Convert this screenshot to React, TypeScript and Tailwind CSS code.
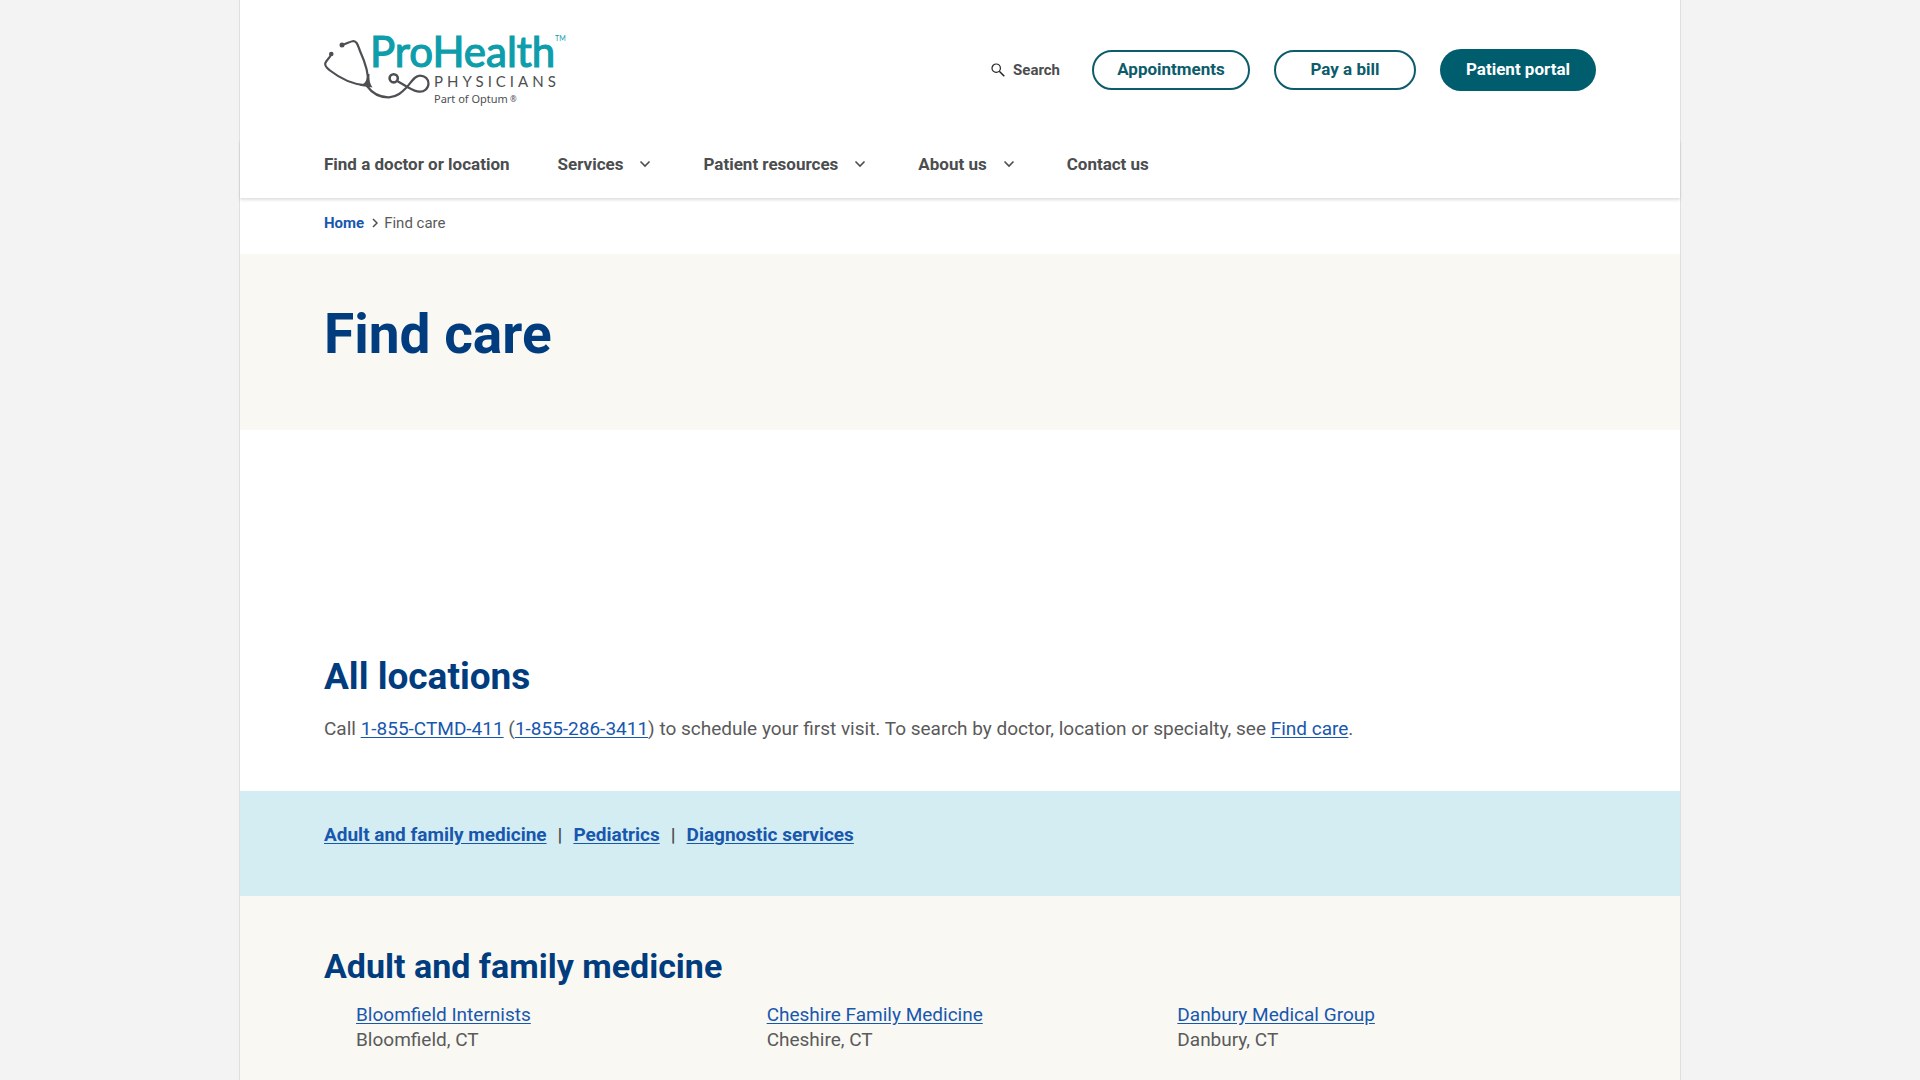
import { ReactNode } from "react";

const navItems = [
  { label: "Find a doctor or location", menu: false },
  { label: "Services", menu: true },
  { label: "Patient resources", menu: true },
  { label: "About us", menu: true },
  { label: "Contact us", menu: false },
];

const sections = ["Adult and family medicine", "Pediatrics", "Diagnostic services"];

const locations = [
  { name: "Bloomfield Internists", city: "Bloomfield, CT" },
  { name: "Cheshire Family Medicine", city: "Cheshire, CT" },
  { name: "Danbury Medical Group", city: "Danbury, CT" },
];

function Logo() {
  return (
    <svg viewBox="0 0 244 76" className="h-[76px] w-[244px] overflow-visible" role="img" aria-label="ProHealth Physicians, Part of Optum">
      <g fill="none" stroke="#4d4f53" strokeWidth="2.2" strokeLinecap="round" strokeLinejoin="round">
        <path d="M7.3 22 C6 26 2 28 1.2 31.500 C0.8 34.500 3 36 6 38.500 C17 47 28 52 40 53" />
        <path d="M18 13 C22 12 26 9.500 29.500 9 C33 9 34 14 36 19 C41 30 45 42 44 52" />
        <path d="M43 54 C48 61 56 65.500 65 65.300 C74 65 79 59 83.500 54.500 C88 49 91 43.600 96 43.600 C101 43.600 104.500 47 104.500 51.500 C104.500 56.500 100 60 95.500 59.700 C91 59.500 87 57 83.500 55 L74 49.500" />
        <circle cx="69.700" cy="46.300" r="4.100" strokeWidth="2.600" />
      </g>
      <circle cx="7.300" cy="22" r="2.300" fill="#4d4f53" />
      <circle cx="18" cy="13" r="2.500" fill="#4d4f53" />
      <path d="M43 42 L45.500 42 C45 48 46 52 48.500 55.500 C45 54.500 40 55 35 53.500 C40 52.500 43 50 43 42 Z" fill="#4d4f53" />
      <text x="46" y="35" className="fill-[#0d9dab] stroke-[#0d9dab] font-['Lato'] text-[42px]" strokeWidth="1.2">ProHealth</text>
      <text x="231" y="9" className="fill-[#0d9dab] font-['Lato'] text-[7px]">TM</text>
      <text x="110" y="55" className="fill-[#4d4f53] font-['Lato'] text-[15px] tracking-[4px]">PHYSICIANS</text>
      <text x="110" y="71" className="fill-[#4d4f53] font-['Noto_Sans'] text-[11px]">Part of Optum</text>
      <text x="186" y="70" className="fill-[#4d4f53] font-['Noto_Sans'] text-[8px]">®</text>
    </svg>
  );
}

function Chevron() {
  return (
    <svg viewBox="0 0 12 8" className="h-2 w-3" fill="none" stroke="#4b4d4f" strokeWidth="1.6" aria-hidden="true">
      <path d="M1.500 1.500 L6 6 L10.500 1.500" />
    </svg>
  );
}

function TextLink({ children }: { children: ReactNode }) {
  return (
    <a href="#" className="text-[#1857ae] underline underline-offset-2">
      {children}
    </a>
  );
}

export default function App() {
  return (
    <div className="min-h-screen overflow-hidden bg-[#f3f3f3] font-['Roboto','Liberation_Sans',sans-serif] text-[19px] text-[#5a5a5a]">
      <div className="mx-auto min-h-screen max-w-[1442px] border-x border-[#e0e0e0] bg-white">
        <header>
          <div className="flex h-[140px] items-center justify-between px-[84px]">
            <a href="#">
              <Logo />
            </a>
            <div className="flex items-center gap-6">
              <button type="button" className="mr-2 flex items-center gap-2 text-[15px] font-bold text-[#4b4d4f]">
                <svg viewBox="0 0 14 14" className="h-3.5 w-3.5" fill="none" stroke="#222" strokeWidth="1.200" aria-hidden="true">
                  <circle cx="5.200" cy="5.200" r="4.200" />
                  <path d="M8.300 8.300 L13.300 13.300" strokeWidth="1.500" />
                </svg>
                Search
              </button>
              <a href="#" className="flex h-10 w-[158px] items-center justify-center rounded-full border-2 border-[#0c5c6c] text-[17px] font-bold text-[#0c5c6c]">Appointments</a>
              <a href="#" className="flex h-10 w-[142px] items-center justify-center rounded-full border-2 border-[#0c5c6c] text-[17px] font-bold text-[#0c5c6c]">Pay a bill</a>
              <a href="#" className="flex h-[42px] w-[156px] items-center justify-center rounded-full bg-[#005d6e] text-[17px] font-bold text-white">Patient portal</a>
            </div>
          </div>
          <nav aria-label="Main" className="px-[84px] pt-3 pb-[22px] shadow-[0_2px_3px_rgba(0,0,0,0.13)]">
            <ul className="flex items-center gap-12 text-[17px] leading-6 font-bold text-[#4b4d4f]">
              {navItems.map((item) => (
                <li key={item.label}>
                  {item.menu ? (
                    <button type="button" className="flex items-center gap-4 pr-1">
                      {item.label}
                      <Chevron />
                    </button>
                  ) : (
                    <a href="#" className="block">{item.label}</a>
                  )}
                </li>
              ))}
            </ul>
          </nav>
        </header>

        <main>
          <nav aria-label="Breadcrumb" className="flex h-14 items-center px-[84px] pb-1.5 text-[15px]">
            <a href="#" className="font-bold text-[#1857ae]">Home</a>
            <svg viewBox="0 0 6 10" className="mr-1.5 ml-2 h-2.5 w-1.5" fill="none" stroke="#4b4d4f" strokeWidth="1.500" aria-hidden="true">
              <path d="M1 1 L5 5 L1 9" />
            </svg>
            <span>Find care</span>
          </nav>

          <div className="h-44 bg-[#f9f8f3] px-[84px] pt-12">
            <h1 className="text-[55px] leading-[64px] font-bold text-[#003c7e]">Find care</h1>
          </div>

          <section className="px-[84px] pt-[222px] pb-[50px]">
            <h2 className="text-[37px] leading-[50px] font-bold text-[#003c7e]">All locations</h2>
            <p className="mt-3.5 leading-[25px]">
              Call <TextLink>1-855-CTMD-411</TextLink> (<TextLink>1-855-286-3411</TextLink>) to schedule your first visit. To search by doctor, location or specialty, see <TextLink>Find care</TextLink>.
            </p>
          </section>

          <nav aria-label="Specialties" className="flex h-[105px] gap-[11px] bg-[#d4edf2] px-[84px] pt-[31px] leading-[25px] font-bold">
            {sections.map((name, i) => (
              <span key={name} className="flex gap-[11px]">
                {i > 0 && <span className="text-[#4b4d4f]">|</span>}
                <TextLink>{name}</TextLink>
              </span>
            ))}
          </nav>

          <section className="bg-[#f9f8f3] px-[84px] pt-[50px] pb-12">
            <h2 className="text-[34px] leading-10 font-bold text-[#003c7e]">Adult and family medicine</h2>
            <ul className="mt-4 grid grid-cols-3 pr-2 pl-8 leading-[25px]">
              {locations.map((place) => (
                <li key={place.name}>
                  <TextLink>{place.name}</TextLink>
                  <p>{place.city}</p>
                </li>
              ))}
            </ul>
          </section>
        </main>
      </div>
    </div>
  );
}
